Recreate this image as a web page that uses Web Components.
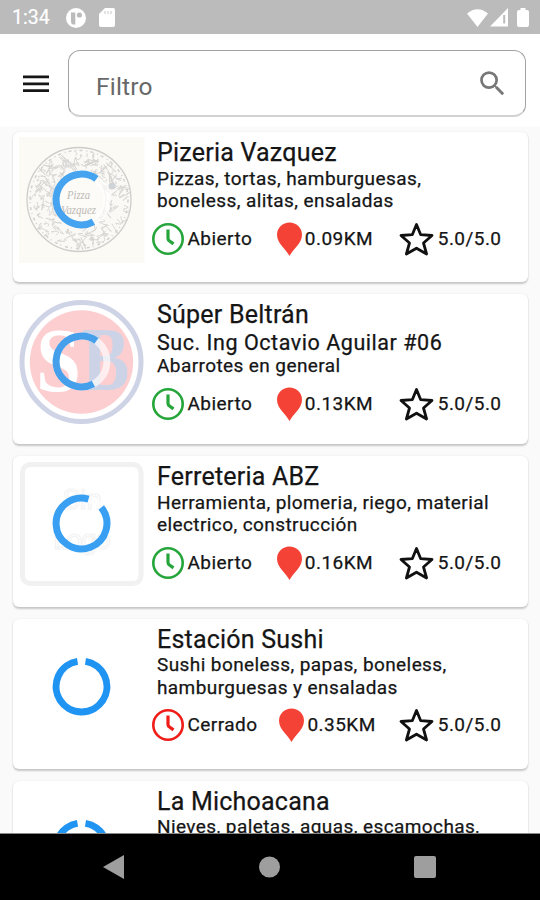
<!DOCTYPE html>
<html lang="es">
<head>
<meta charset="utf-8">
<title>Negocios</title>
<style>
html,body{margin:0;height:900px;overflow:hidden}
body{font-family:Roboto,sans-serif;color:#151515;background:#fafafa}
</style>
</head>
<body>
<shop-app></shop-app>
<script>
const define=(name,html)=>customElements.define(name,class extends HTMLElement{
  constructor(){super();this.attachShadow({mode:'open'});}
  connectedCallback(){
    this.shadowRoot.innerHTML=typeof html==='function'?html(this):html;
  }
});

define('status-bar',`<style>
:host{display:flex;height:34px;box-sizing:border-box;background:#bbb;color:#fff;align-items:center;padding:1px 11px 0 12px;flex:none}
span{font-size:19.500px;line-height:24px;width:53.500px;-webkit-text-stroke:.2px #fff}
svg{display:block;fill:#fff}
.sd{margin-left:13px}.wifi{margin-left:auto}.sig{margin-left:2px}.bat{margin-left:9px}
</style>
<span>1:34</span>
<svg width="20" height="20"><circle cx="10" cy="10" r="10"/><path d="M5 4.500h4.300v12h-2q-2.300-.5-2.300-3z" fill="#bbb"/><circle cx="13.400" cy="7" r="2.600" fill="#bbb"/></svg>
<svg class="sd" width="16" height="19"><path d="M6 0h8q2 0 2 2v15q0 2-2 2H2q-2 0-2-2V6z"/><path d="M6 3v3M9 3v3M12 3v3" stroke="#d8d8d8" stroke-width="1.400"/></svg>
<svg class="wifi" width="21" height="18"><path d="M0 4.500Q10.500-4.200 21 4.500L10.500 18z"/></svg>
<svg class="sig" width="18" height="19"><path d="M0 18.500L18 0v18.500z"/><path d="M14.200 7v8.500" stroke="#bbb" stroke-width="2"/></svg>
<svg class="bat" width="12" height="19"><path d="M3.500 2V0h5v2H10q2 0 2 2v13q0 2-2 2H2q-2 0-2-2V4q0-2 2-2z"/></svg>`);

define('search-bar',`<style>
:host{display:flex;height:92.500px;box-sizing:border-box;background:#fff;padding:16px 14px 9px 23px;flex:none}
.menu{margin:25px 18.500px 0 0;flex:none}
.field{flex:1;height:67px;box-sizing:border-box;border:1.500px solid #a2a2a2;border-bottom:2px solid #d2d2d2;border-radius:12px;display:flex;align-items:center;justify-content:space-between;padding:6px 16px 0 27.500px}
span{font-size:24.500px;letter-spacing:.2px;color:#686868;line-height:30px;margin-top:2px}
.field svg{margin-top:-6px}
</style>
<svg class="menu" width="26" height="18"><path d="M0 1.800h26M0 8.800h26M0 15.700h26" stroke="#161616" stroke-width="2.700"/></svg>
<div class="field"><span>Filtro</span>
<svg width="33" height="33" viewBox="0 0 24 24" fill="#777"><path d="M15.500 14h-.79l-.28-.27A6.471 6.471 0 0 0 16 9.500 6.500 6.500 0 1 0 9.500 16c1.610 0 3.090-.59 4.230-1.570l.27.28v.79l5 4.990L20.490 19l-4.990-5zm-6 0C7.010 14 5 11.990 5 9.500S7.010 5 9.500 5 14 7.010 14 9.500 11.990 14 9.500 14z"/></svg></div>`);

/* Circular progress ring: start and end in degrees, clockwise from the x axis. */
define('load-ring',el=>{
  const p=d=>{const a=d*Math.PI/180;return (29.5+25.4*Math.cos(a)).toFixed(2)+' '+(29.5+25.4*Math.sin(a)).toFixed(2);};
  return `<style>:host{display:block;width:59px;height:59px}svg{display:block}</style>
<svg width="59" height="59" fill="none" stroke-width="7"><circle cx="29.500" cy="29.500" r="25.400" stroke="#fff" stroke-opacity=".65"/>
<path d="M${p(+el.getAttribute('start'))}A25.400 25.400 0 1 1 ${p(+el.getAttribute('end'))}" stroke="${el.getAttribute('tone')}"/></svg>`;
});

/* Line-art pizza crest: a speckled disc of small curls inside a rim. */
function curls(){
  let seed=7,out='';
  const r=()=>(seed=(seed*16807)%2147483647)/2147483647;
  for(let i=0;i<190;i++){
    const a=r()*6.283,d=28+r()*19,x=60+d*Math.cos(a),y=62.5+d*Math.sin(a);
    const s=2+r()*4;
    out+=`M${x.toFixed(1)} ${y.toFixed(1)}q${(s*(r()*2-1)*1.6).toFixed(1)} ${(s*(r()*2-1)*1.6).toFixed(1)} ${(s*(r()*2-1)).toFixed(1)} ${(s*(r()*2-1)).toFixed(1)}t${(2*(r()*2-1)).toFixed(1)} ${(2*(r()*2-1)).toFixed(1)}`;
  }
  return out;
}
const logos={
 pizza:()=>`<rect width="125.500" height="126" fill="#fcfaf4"/>
  <circle cx="60" cy="62.500" r="52" fill="#faf9f6" stroke="#cfcdca" stroke-width="1.300"/>
  <circle cx="60" cy="62.500" r="49" fill="none" stroke="#d4d2cf" stroke-width="1.500" stroke-dasharray="3 4 1 3"/>
  <path d="${curls()}" fill="none" stroke="#d6d4d1" stroke-width=".9"/>
  <circle cx="60" cy="62.500" r="27" fill="#fcfbf8" stroke="#dbd9d6"/>
  <circle cx="93" cy="49" r="3.500" fill="#cfd2d6"/>
  <g fill="#bdb9b4" font-family="Liberation Serif,serif" font-style="italic"><text x="48" y="62" font-size="13" textLength="23" lengthAdjust="spacingAndGlyphs">Pizza</text><text x="42" y="76.500" font-size="12" textLength="35" lengthAdjust="spacingAndGlyphs">Vazquez</text></g>`,
 sb:()=>`<circle cx="62.500" cy="63" r="59.500" fill="#fff" stroke="#ced3e6" stroke-width="5"/><circle cx="62.500" cy="63" r="51.700" fill="#fdced0"/>
  <g font-family="Liberation Serif,serif" font-weight="700" font-size="90"><text transform="translate(17 92) scale(.9 1)" fill="#fff">S</text><text transform="translate(63 91) scale(.79 1)" fill="#cdd3e6">B</text></g>`,
 none:()=>`<rect x="3.500" y="3.500" width="118.500" height="119" rx="8" fill="#fff" stroke="#f1f1f1" stroke-width="5"/>
  <g font-family="Roboto,sans-serif" font-size="28" fill="#fff" stroke="#f3f3f3" stroke-width="1.200"><text x="44" y="48">Sin</text><text x="34" y="88" textLength="58">Logo</text></g>`,
 blank:()=>''
};
define('shop-logo',el=>`<style>:host{display:grid;width:126px;height:126px;flex:none}
svg,load-ring{grid-area:1/1}svg{display:block}load-ring{margin:33px 0 0 33px}</style>
<svg width="126" height="126">${logos[el.getAttribute('kind')]()}</svg>
<load-ring start="${el.getAttribute('start')}" end="${el.getAttribute('end')}" tone="${el.getAttribute('tone')}"></load-ring>`);

const icons={
 clock:`<svg width="32" height="32" fill="none" stroke="var(--tone)"><circle cx="16" cy="16" r="14.700" stroke-width="2.600"/><path d="M16 6.500v9q0 1.500 1.500 2.500l4 2.900" stroke-width="3.200"/></svg>`,
 pin:`<svg width="25" height="34" fill="#f44336"><path d="M12.500 34C9.500 27.500 0 21.500 0 12.700a12.500 12.300 0 0 1 25 0C25 21.500 15.500 27.500 12.500 34z"/></svg>`,
 star:`<svg width="35" height="34" fill="none" stroke="#111" stroke-width="2.800" stroke-linejoin="round"><path d="M17.500 2.500L21.700 12.700L33 13.500L24.500 21L27.600 32L17.500 26.200L7.400 32L10.500 21L2 13.500L13.300 12.700z"/></svg>`
};
define('info-chip',el=>`<style>:host{display:flex;align-items:center;height:34px;font-size:19px;line-height:22.300px;letter-spacing:.45px;white-space:nowrap}
svg{display:block;flex:none;margin-right:var(--gap,3px)}span{margin-top:1px}</style>${icons[el.getAttribute('icon')]}<span><slot></slot></span>`);

define('shop-card',`<style>
:host{display:flex;box-sizing:border-box;height:150.200px;margin:0 12.500px 12px 13px;padding:5px 26px 0 6px;background:#fff;border-radius:6px;box-shadow:0 1.500px 2px rgba(0,0,0,.2),0 0 2px rgba(0,0,0,.05);-webkit-text-stroke:.25px #151515;flex:none}
shop-logo{-webkit-text-stroke:0}
.body{flex:1;min-width:0;padding:1px 0 0 12px}
.title{font-size:25px;line-height:29.500px;letter-spacing:.22px;white-space:nowrap}
.desc{font-size:19px;line-height:22.500px;letter-spacing:.41px;white-space:nowrap}
::slotted([slot=branch]){display:block;font-size:21.500px;line-height:25.500px;letter-spacing:.55px;white-space:nowrap}
::slotted([slot=logo]){-webkit-text-stroke:0}
.info{display:flex;justify-content:space-between;margin:9px 0 0 -5.500px}
</style>
<slot name="logo"></slot>
<div class="body"><div class="title"><slot name="title"></slot></div><slot name="branch"></slot><div class="desc"><slot></slot></div><div class="info"><slot name="info"></slot></div></div>`);

define('nav-bar',`<style>:host{display:flex;justify-content:space-between;align-items:center;height:67.500px;box-sizing:border-box;background:#000;border-top:1px solid #888;padding:1px 104px 0 103px;flex:none}svg{display:block;fill:#9e9e9e}</style>
<svg width="21" height="24"><path d="M0 12L21 0v24z"/></svg><svg width="22" height="22"><circle cx="11.500" cy="11" r="10.500"/></svg><svg width="22" height="22"><rect width="22" height="22" rx="2"/></svg>`);

const shops=[
 {t:'Pizeria Vazquez',d:'Pizzas, tortas, hamburguesas,<br>boneless, alitas, ensaladas',k:'0.09KM',l:'pizza',r:[62,-54,'#45a3ef']},
 {t:'Súper Beltrán',b:'Suc. Ing Octavio Aguilar #06',d:'Abarrotes en general',k:'0.13KM',l:'sb',r:[62,-54,'#459fea']},
 {t:'Ferreteria ABZ',d:'Herramienta, plomeria, riego, material<br>electrico, construcción',k:'0.16KM',l:'none',r:[-39,-74,'#389ff3']},
 {t:'Estación Sushi',d:'Sushi boneless, papas, boneless,<br>hamburguesas y ensaladas',k:'0.35KM',closed:1,l:'blank',r:[-81,-99,'#2094f3']},
 {t:'La Michoacana',d:'Nieves, paletas, aguas, escamochas,',k:'',l:'blank',r:[-81,-99,'#2094f3']}
];
define('shop-app',`<style>
:host{display:flex;flex-direction:column;width:540px;height:900px;overflow:hidden}
main{flex:1;min-height:0;overflow:hidden;background:#fafafa;padding-top:5.500px;display:flex;flex-direction:column}
.star{margin-left:1px;--gap:4px}
</style>
<status-bar></status-bar><search-bar></search-bar>
<main>${shops.map((s,i)=>`<shop-card>
<shop-logo slot="logo" kind="${s.l}" start="${s.r[0]}" end="${s.r[1]}" tone="${s.r[2]}"></shop-logo>
<span slot="title">${s.t}</span>${s.b?`<span slot="branch">${s.b}</span>`:''}${s.d}
${i<4?`<info-chip slot="info" icon="clock" style="--tone:${s.closed?'#f01c18':'#25a53a'};--gap:4px">${s.closed?'Cerrado':'Abierto'}</info-chip>
<info-chip slot="info" icon="pin">${s.k}</info-chip>
<info-chip slot="info" class="star" icon="star">5.0/5.0</info-chip>`:''}</shop-card>`).join('')}</main>
<nav-bar></nav-bar>`);
</script>
</body>
</html>
